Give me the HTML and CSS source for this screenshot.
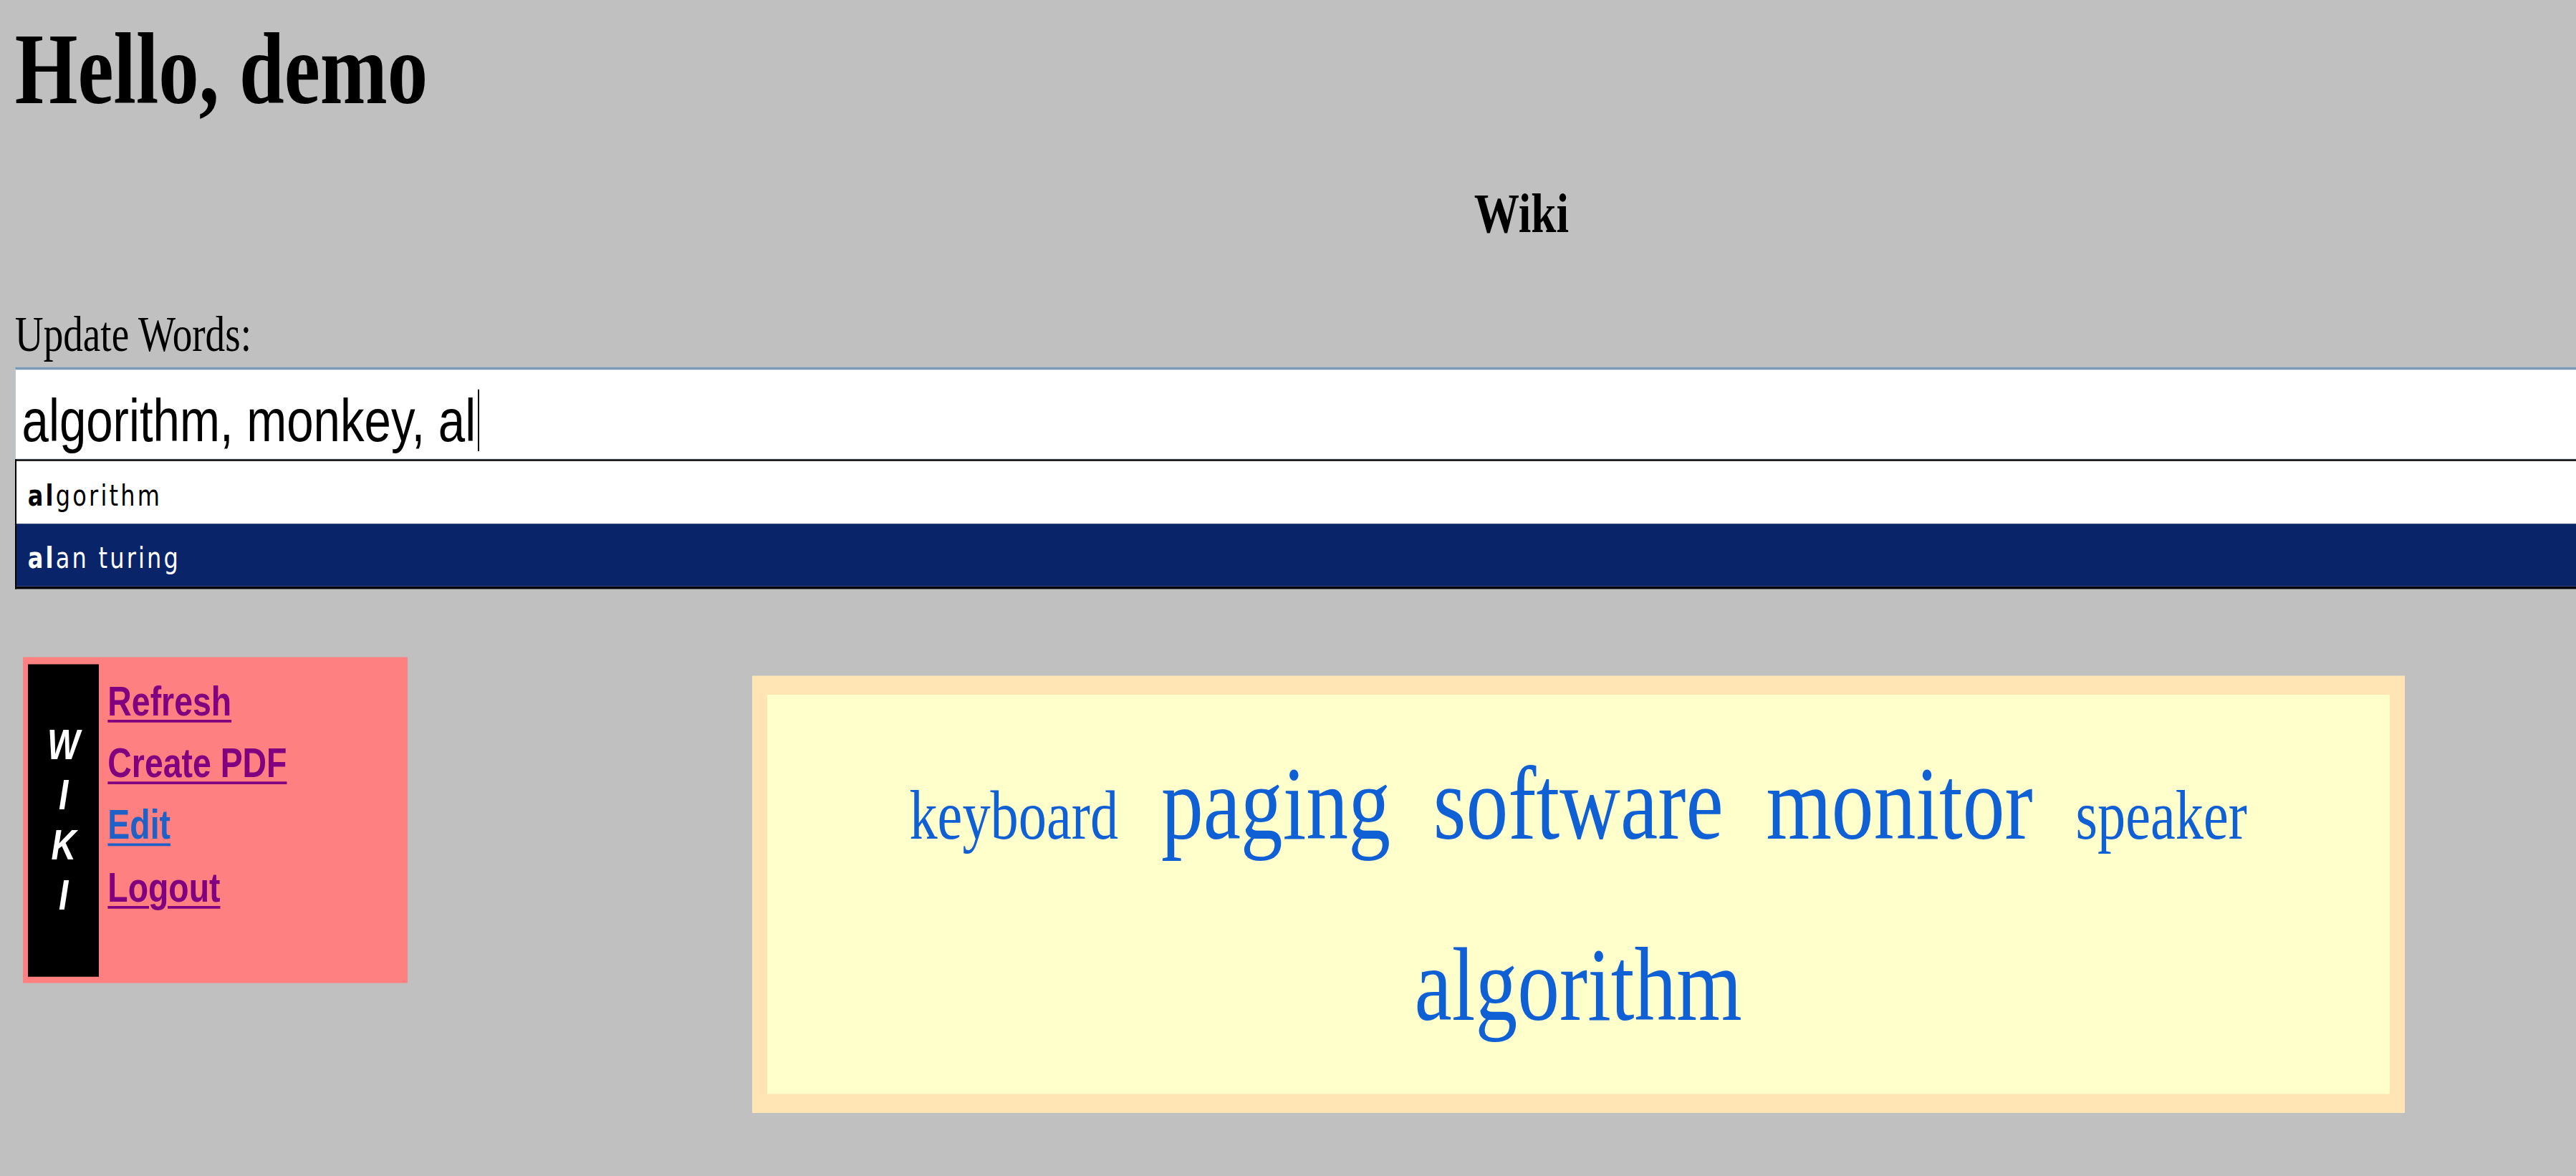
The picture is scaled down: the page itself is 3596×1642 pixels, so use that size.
FILE: index.html
```html
<!DOCTYPE html>
<html lang="en">
<head>
<meta charset="utf-8">
<title>Wiki</title>
<link rel="stylesheet" href="styles.css">
</head>
<body>
<div class="page">
  <h1 class="greeting">Hello, demo</h1>
  <h2 class="title">Wiki</h2>
  <form class="update">
    <label class="label">Update Words:</label>
    <div class="field">algorithm, monkey, al<span class="caret"></span></div>
    <ul class="suggest">
      <li class="option"><b>al</b>gorithm</li>
      <li class="option selected"><b>al</b>an turing</li>
    </ul>
  </form>
  <div class="content">
    <nav class="sidebar">
      <div class="brand"><span>W</span><span>I</span><span>K</span><span>I</span></div>
      <ul class="links">
        <li><a class="visited" href="#">Refresh</a></li>
        <li><a class="visited" href="#">Create PDF</a></li>
        <li><a class="fresh" href="#">Edit</a></li>
        <li><a class="visited" href="#">Logout</a></li>
      </ul>
    </nav>
    <div class="cloud">
      <div class="cloud-inner"><span class="tag small">keyboard</span> <span class="tag">paging</span> <span class="tag">software</span> <span class="tag">monitor</span> <span class="tag small">speaker</span> <span class="tag">algorithm</span></div>
    </div>
  </div>
</div>
</body>
</html>
```
FILE: styles.css
```css
html {
  overflow: hidden;
  background: #c0c0c0;
}

body {
  margin: 0;
  padding: 0;
  min-height: 100vh;
  background: #c0c0c0;
}

/* The original capture is stretched vertically by 1.25 */
.page {
  box-sizing: border-box;
  width: 3596px;
  padding: 20.8px 0 0 20.8px;
  transform: scaleY(1.25);
  transform-origin: 0 0;
  color: #000;
}

.greeting {
  margin: 0;
  font-family: "Liberation Serif", serif;
  font-weight: bold;
  font-size: 112.8px;
  line-height: 1;
}

.title {
  margin: 73.6px 0 0;
  padding-left: 631px;
  font-family: "Liberation Serif", serif;
  font-weight: bold;
  font-size: 63.2px;
  line-height: 1;
  text-align: center;
}

.update {
  margin: 0;
}

.label {
  display: block;
  margin-top: 76px;
  font-family: "Liberation Serif", serif;
  font-size: 55.2px;
  line-height: 1;
}

.field {
  margin-top: 8px;
  background: #fff;
  border-top: 3.2px solid #7b98b4;
  border-left: 1.6px solid #b5c8da;
  border-bottom: 1.6px solid #dbe6f0;
  padding: 22.4px 0 7.2px 8.8px;
  font-family: "Liberation Sans", Arial, sans-serif;
  font-size: 67.2px;
  line-height: 68.8px;
  white-space: nowrap;
}

.caret {
  display: inline-block;
  width: 0;
  height: 68.8px;
  margin-left: 3.2px;
  border-left: 2.4px solid #000;
  vertical-align: -11.2px;
}

.suggest {
  list-style: none;
  margin: 0.8px 0 0;
  padding: 0;
  border: 2.4px solid #000;
  border-bottom-width: 3.2px;
  border-right: none;
  background: #fff;
}

.option {
  box-sizing: border-box;
  height: 69.6px;
  padding: 22.4px 0 0 16px;
  font-family: "DejaVu Sans", Verdana, sans-serif;
  font-size: 32px;
  line-height: 1;
  letter-spacing: 3.2px;
  color: #000;
}

.option.selected {
  height: 70.4px;
  background: #0a246a;
  color: #fff;
}

.content {
  display: flex;
  align-items: flex-start;
  margin-top: 76px;
  padding-left: 11.2px;
}

.sidebar {
  box-sizing: border-box;
  display: flex;
  align-items: flex-start;
  width: 536.8px;
  padding: 7.2px 0 6.4px 7.2px;
  background: #ff8080;
  flex: none;
}

.brand {
  display: flex;
  flex-direction: column;
  align-items: center;
  justify-content: center;
  width: 99.2px;
  height: 349.6px;
  background: #000;
  color: #fff;
  font-family: "Liberation Sans", Arial, sans-serif;
  font-style: italic;
  font-weight: bold;
  font-size: 48px;
  line-height: 56px;
  flex: none;
}

.links {
  list-style: none;
  margin: 0;
  padding: 7.2px 0 0 12px;
  font-family: "Liberation Sans", Arial, sans-serif;
  font-weight: bold;
  font-size: 46.4px;
  line-height: 69.36px;
}

.links a {
  text-decoration: underline;
  text-decoration-thickness: 3.2px;
  text-underline-offset: 4.8px;
}

.links a.visited {
  color: #800080;
}

.links a.fresh {
  color: #1e62c8;
}

.cloud {
  box-sizing: border-box;
  width: 2307.2px;
  margin: 20.8px 0 0 480.8px;
  border: 21.6px solid #ffe5b4;
  background: #ffffcc;
  flex: none;
}

.cloud-inner {
  padding: 20.8px 0 21.6px;
  text-align: center;
  font-family: "Liberation Serif", serif;
  font-size: 117.6px;
  line-height: 201.6px;
  color: #0f5fd5;
}

.tag {
  margin: 0 15.2px;
  line-height: 1;
}

.tag.small {
  font-size: 78.4px;
}
```
